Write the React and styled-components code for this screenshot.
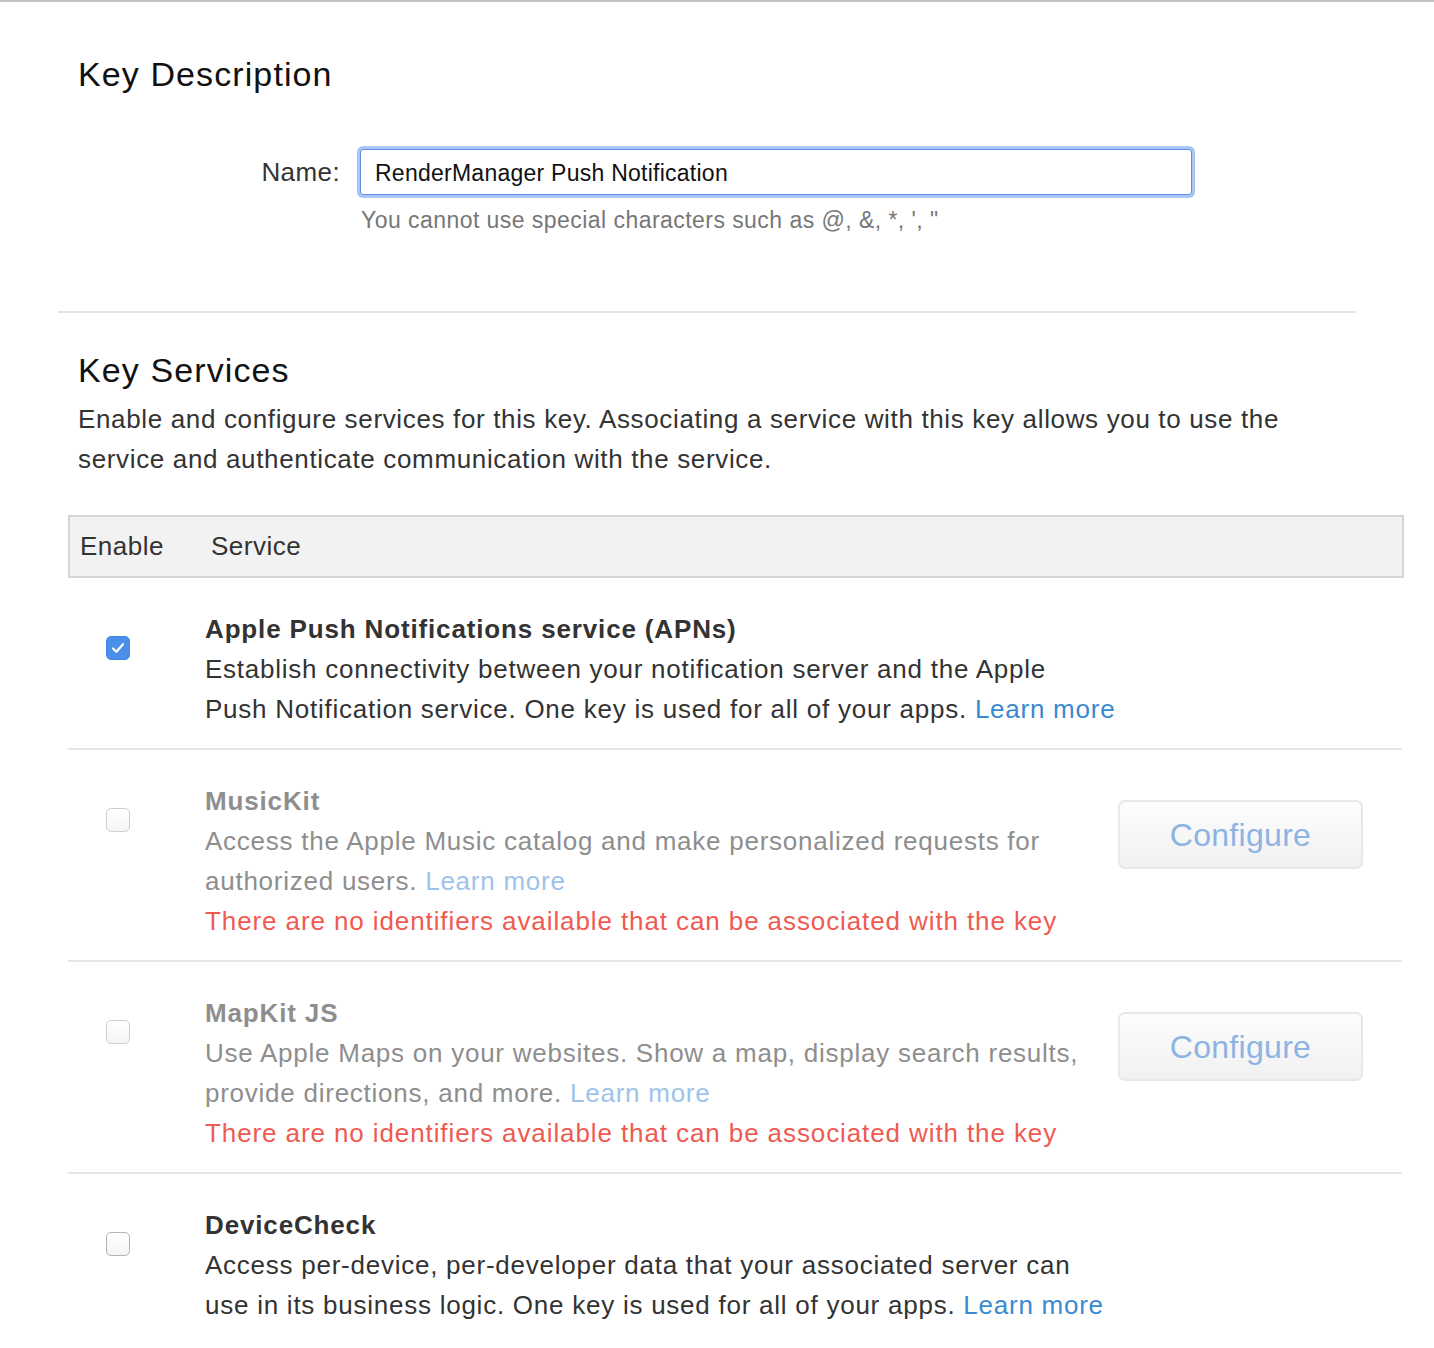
import React from "react";
import styled, { createGlobalStyle } from "styled-components";

const GlobalStyle = createGlobalStyle`
  html, body {
    margin: 0;
    padding: 0;
    background: #fff;
  }
  body {
    font-family: "Liberation Sans", Arial, sans-serif;
    color: #333;
  }
`;

const services = [
  {
    id: "apns",
    title: "Apple Push Notifications service (APNs)",
    lines: [
      "Establish connectivity between your notification server and the Apple",
      "Push Notification service. One key is used for all of your apps.",
    ],
    checked: true,
  },
  {
    id: "musickit",
    title: "MusicKit",
    lines: [
      "Access the Apple Music catalog and make personalized requests for",
      "authorized users.",
    ],
    disabled: true,
    configure: true,
    error: "There are no identifiers available that can be associated with the key",
  },
  {
    id: "mapkit",
    title: "MapKit JS",
    lines: [
      "Use Apple Maps on your websites. Show a map, display search results,",
      "provide directions, and more.",
    ],
    disabled: true,
    configure: true,
    error: "There are no identifiers available that can be associated with the key",
  },
  {
    id: "devicecheck",
    title: "DeviceCheck",
    lines: [
      "Access per-device, per-developer data that your associated server can",
      "use in its business logic. One key is used for all of your apps.",
    ],
  },
];

const App = () => {
  return (
    <Page>
      <GlobalStyle />
      <DescSection>
        <Heading>Key Description</Heading>
        <NameRow>
          <Label htmlFor="key-name">Name:</Label>
          <NameInput id="key-name" defaultValue="RenderManager Push Notification" />
          <span />
          <Hint>You cannot use special characters such as @, &amp;, *, ', "</Hint>
        </NameRow>
      </DescSection>

      <Divider />

      <ServicesSection>
        <Heading>Key Services</Heading>
        <Intro>
          Enable and configure services for this key. Associating a service with this key allows you to use the
          <br />
          service and authenticate communication with the service.
        </Intro>
      </ServicesSection>

      <Table>
        <TableHead>
          <HeadCell>Enable</HeadCell>
          <HeadCell $service>Service</HeadCell>
        </TableHead>
        {services.map((s) => (
          <Row key={s.id}>
            <CheckCell>
              <Checkbox $checked={s.checked} $disabled={s.disabled}>
                {s.checked && (
                  <svg width="14" height="12" viewBox="0 0 14 12">
                    <path
                      d="M2 6.5 L5.4 9.8 L12 2.2"
                      fill="none"
                      stroke="#fff"
                      strokeWidth="2.2"
                      strokeLinecap="round"
                      strokeLinejoin="round"
                    />
                  </svg>
                )}
              </Checkbox>
            </CheckCell>
            <Info $disabled={s.disabled}>
              <Title>{s.title}</Title>
              <Desc>
                {s.lines[0]}
                <br />
                {s.lines[1]} <Link href="#" $disabled={s.disabled}>Learn more</Link>
              </Desc>
              {s.error && <ErrorText>{s.error}</ErrorText>}
            </Info>
            <Actions>{s.configure && <ConfigureButton disabled>Configure</ConfigureButton>}</Actions>
          </Row>
        ))}
      </Table>
    </Page>
  );
};

const Page = styled.div`
  border-top: 2px solid #c4c4c4;
  padding-bottom: 24px;
  width: 1434px;
`;

const DescSection = styled.section`
  padding: 52px 0 0 78px;
`;

const Heading = styled.h2`
  margin: 0;
  font-size: 34px;
  line-height: 40px;
  font-weight: 400;
  letter-spacing: 1.1px;
  color: #111;
`;

const NameRow = styled.div`
  display: grid;
  grid-template-columns: 262px 832px;
  column-gap: 20px;
  align-items: center;
  margin-top: 55px;
`;

const Label = styled.label`
  text-align: right;
  font-size: 26px;
  letter-spacing: 0.4px;
  color: #333;
`;

const NameInput = styled.input`
  box-sizing: border-box;
  height: 46px;
  width: 832px;
  padding: 2px 14px 0;
  font-family: "Liberation Sans", Arial, sans-serif;
  font-size: 23px;
  letter-spacing: 0.25px;
  color: #111;
  border: 1px solid #5d8fe0;
  border-radius: 3px;
  box-shadow: 0 0 0 3px #a9c6f5;
  outline: none;
  background: #fff;
`;

const Hint = styled.div`
  margin-top: 10px;
  font-size: 23px;
  letter-spacing: 0.45px;
  line-height: 30px;
  color: #777;
  padding-left: 1px;
`;

const Divider = styled.hr`
  margin: 76px 0 0 58px;
  width: 1298px;
  border: 0;
  border-top: 2px solid #e4e4e4;
`;

const ServicesSection = styled.section`
  padding: 37px 0 0 78px;
`;

const Intro = styled.p`
  margin: 9px 0 0;
  font-size: 26px;
  letter-spacing: 0.65px;
  line-height: 40px;
  color: #333;
  white-space: nowrap;
`;

const Table = styled.div`
  margin: 36px 0 0 68px;
  width: 1336px;
`;

const TableHead = styled.div`
  display: flex;
  align-items: center;
  box-sizing: border-box;
  height: 63px;
  padding-top: 0;
  background: #f2f2f2;
  border: 2px solid #d6d6d6;
  font-size: 26px;
  letter-spacing: 0.5px;
  color: #333;
`;

const HeadCell = styled.div`
  padding-left: ${(p) => (p.$service ? "0" : "10px")};
  width: ${(p) => (p.$service ? "auto" : "131px")};
`;

const Row = styled.div`
  display: grid;
  grid-template-columns: 137px 1fr auto;
  width: 1334px;
  padding: 31px 0 19px;
  border-bottom: 2px solid #e6e6e6;
  &:last-child {
    border-bottom: 0;
  }
`;

const CheckCell = styled.div`
  padding: 27px 0 0 38px;
`;

const Checkbox = styled.span`
  box-sizing: border-box;
  display: flex;
  align-items: center;
  justify-content: center;
  width: 24px;
  height: 24px;
  border-radius: 5px;
  border: 1px solid
    ${(p) => (p.$checked ? "#3f86e6" : p.$disabled ? "#cfcfcf" : "#b3b3b3")};
  background: ${(p) =>
    p.$checked ? "#4a90ea" : "linear-gradient(#fff, #f4f4f4)"};
  box-shadow: ${(p) => (p.$checked ? "none" : "inset 0 1px 0 #fff")};
`;

const Info = styled.div`
  color: ${(p) => (p.$disabled ? "#8e8e8e" : "#333")};
  font-size: 26px;
  letter-spacing: 0.75px;
  line-height: 40px;
  white-space: nowrap;
`;

const Title = styled.div`
  font-weight: 700;
  letter-spacing: 0.85px;
`;

const Desc = styled.div``;

const Link = styled.a`
  color: ${(p) => (p.$disabled ? "#9ec3ea" : "#3a8ad2")};
  text-decoration: none;
`;

const ErrorText = styled.div`
  color: #ef5a51;
  letter-spacing: 0.9px;
`;

const Actions = styled.div`
  padding: 19px 39px 0 0;
`;

const ConfigureButton = styled.button`
  box-sizing: border-box;
  width: 245px;
  height: 69px;
  padding-top: 2px;
  border: 2px solid #e8e8e8;
  border-radius: 7px;
  background: linear-gradient(#fdfdfd, #f1f1f1);
  font-family: "Liberation Sans", Arial, sans-serif;
  font-size: 32px;
  letter-spacing: 0.3px;
  color: #8cb3e3;
  cursor: default;
`;

export default App;
